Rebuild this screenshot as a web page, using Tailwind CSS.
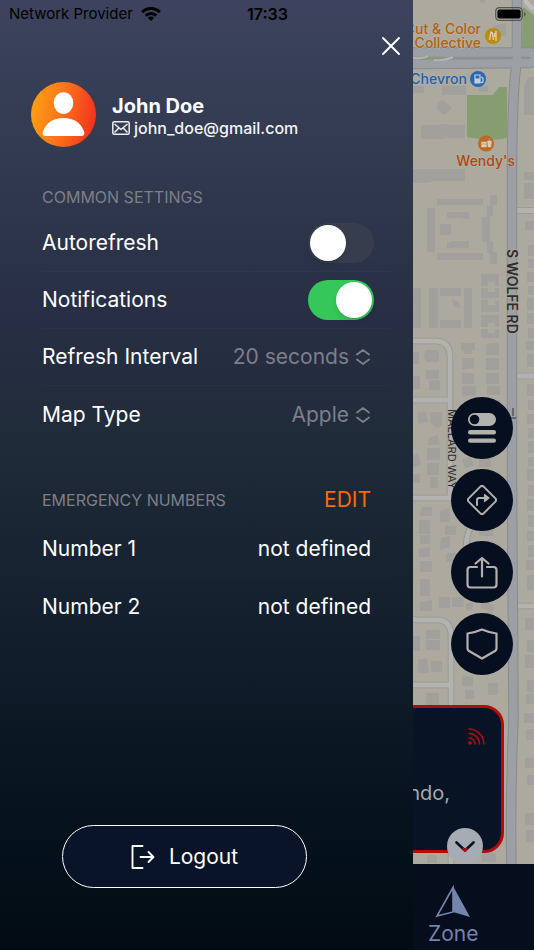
<!DOCTYPE html>
<html lang="en">
<head>
  <meta charset="UTF-8" />
  <meta name="viewport" content="width=device-width, initial-scale=1.0" />
  <title>Settings</title>
  <script src="https://cdn.jsdelivr.net/npm/@tailwindcss/browser@4"></script>
</head>
<body class="bg-[#020b13] font-['Inter','Roboto',sans-serif] text-white">
  <div class="relative grid min-h-screen grid-cols-[1fr_121px]">

    <!-- Status bar -->
    <header class="absolute inset-x-0 top-0 z-20 grid h-7 grid-cols-3 items-center pr-2 pl-[9px] text-[15px] text-black">
      <div class="flex items-center gap-2 whitespace-nowrap">
        <span>Network Provider</span>
        <svg class="h-[14px] w-5" viewBox="0 0 20 14" fill="none" stroke="#000" stroke-width="3">
          <path d="M1.2 5.2a12.6 12.6 0 0 1 17.6 0" />
          <path d="M4.7 8.7a7.6 7.6 0 0 1 10.6 0" />
          <path d="M10 14 6.9 10.9a4.4 4.4 0 0 1 6.2 0z" fill="#000" stroke="none" />
        </svg>
      </div>
      <time class="text-center text-base font-semibold">17:33</time>
      <svg class="h-[14px] w-[31px] justify-self-end" viewBox="0 0 31 14">
        <rect x="0.7" y="0.7" width="26.6" height="12.6" rx="3.6" fill="none" stroke="#55554f" stroke-width="1.2" />
        <rect x="2.4" y="2.4" width="23.2" height="9.2" rx="2" fill="#000" />
        <path d="M29 5v4.400q1.500-.6 1.500-2.200t-1.500-2.200z" fill="#55554f" />
      </svg>
    </header>

    <!-- Settings drawer -->
    <aside class="flex flex-col bg-[linear-gradient(to_bottom,#3d435e_0%,#313a4f_17%,#272e43_34%,#212c3b_45%,#131f2d_66%,#05121c_87%,#020b13_100%)] pt-9 pb-[62px]">
      <button type="button" aria-label="Close" class="mr-3 self-end">
        <svg class="size-5" viewBox="0 0 20 20" fill="none" stroke="#fff" stroke-width="1.9" stroke-linecap="round">
          <path d="M2 2l16 16M18 2 2 18" />
        </svg>
      </button>

      <section class="mt-[26px] flex items-center gap-4 pl-[31px]">
        <svg class="size-[65px] shrink-0" viewBox="0 0 65 65">
          <defs>
            <linearGradient id="avatar" x1="0" y1="0.4" x2="1" y2="0.6">
              <stop offset="0" stop-color="#fd9f14" />
              <stop offset="0.5" stop-color="#fb6f1c" />
              <stop offset="1" stop-color="#f2301d" />
            </linearGradient>
          </defs>
          <circle cx="32.500" cy="32.500" r="32.500" fill="url(#avatar)" />
          <ellipse cx="32.500" cy="21" rx="9.800" ry="10.800" fill="#fff" />
          <path d="M15 54c-3 0-4-2-3-4.500C15 41 22 36 32.500 36S50 41 53 49.500c1 2.500 0 4.500-3 4.500z" fill="#fff" />
        </svg>
        <div class="pt-[2px]">
          <h1 class="text-xl leading-6 font-bold">John Doe</h1>
          <p class="flex items-center gap-1 text-base leading-5 font-medium text-gray-100">
            <svg class="h-[14px] w-[18px]" viewBox="0 0 18 14" fill="none" stroke="#eee" stroke-width="1.500" stroke-linejoin="round">
              <rect x="0.8" y="0.8" width="16.400" height="12.400" rx="1.500" />
              <path d="M2.500 3 9 8.500 15.500 3M2.500 11.500l4.300-4.600M15.500 11.500l-4.300-4.600" />
            </svg>
            john_doe@gmail.com
          </p>
        </div>
      </section>

      <section class="mt-9 pr-[22px] pl-[42px]">
        <h2 class="h-8 text-base leading-7 text-[#7d7f88]">COMMON SETTINGS</h2>
        <ul class="divide-y divide-white/2 text-[21px]">
          <li class="flex h-[57px] items-center justify-between pr-[17px]">
            <label for="autorefresh">Autorefresh</label>
            <input id="autorefresh" type="checkbox" role="switch" class="h-10 w-[66px] appearance-none rounded-full bg-[#373d4d] p-[2px] before:block before:size-9 before:rounded-full before:bg-white before:shadow-md checked:bg-[#35c759] checked:before:ml-auto" />
          </li>
          <li class="flex h-[57px] items-center justify-between pr-[17px]">
            <label for="notifications">Notifications</label>
            <input id="notifications" type="checkbox" role="switch" checked class="h-10 w-[66px] appearance-none rounded-full bg-[#373d4d] p-[2px] before:block before:size-9 before:rounded-full before:bg-white before:shadow-md checked:bg-[#35c759] checked:before:ml-auto" />
          </li>
          <li class="flex h-[57px] items-center justify-between pr-[21px]">
            <label for="interval">Refresh Interval</label>
            <div class="flex items-center gap-[7px] text-[#7d7f88]">
              <select id="interval" class="field-sizing-content appearance-none bg-transparent">
                <option>10 seconds</option>
                <option selected>20 seconds</option>
                <option>30 seconds</option>
              </select>
              <svg class="h-4 w-[14px]" viewBox="0 0 14 16" fill="none" stroke="currentColor" stroke-width="1.800" stroke-linecap="round" stroke-linejoin="round">
                <path d="M1 5.500 7 1l6 4.500M1 10.500 7 15l6-4.500" />
              </svg>
            </div>
          </li>
          <li class="flex h-[57px] items-center justify-between pr-[21px]">
            <label for="maptype">Map Type</label>
            <div class="flex items-center gap-[7px] text-[#7d7f88]">
              <select id="maptype" class="field-sizing-content appearance-none bg-transparent">
                <option selected>Apple</option>
                <option>Google</option>
              </select>
              <svg class="h-4 w-[14px]" viewBox="0 0 14 16" fill="none" stroke="currentColor" stroke-width="1.800" stroke-linecap="round" stroke-linejoin="round">
                <path d="M1 5.500 7 1l6 4.500M1 10.500 7 15l6-4.500" />
              </svg>
            </div>
          </li>
        </ul>
      </section>

      <section class="mt-[38px] pr-[22px] pl-[42px]">
        <div class="mb-[2px] flex h-[38px] items-center justify-between pr-5">
          <h2 class="text-base text-[#7d7f88]">EMERGENCY NUMBERS</h2>
          <button type="button" class="text-[21px] text-[#ff6a00]">EDIT</button>
        </div>
        <ul class="divide-y divide-white/2 text-[21px]">
          <li class="flex h-[57px] items-center justify-between pr-5"><span>Number 1</span><span>not defined</span></li>
          <li class="flex h-[57px] items-center justify-between pr-5"><span>Number 2</span><span>not defined</span></li>
        </ul>
      </section>

      <button type="button" class="mt-auto ml-[62px] flex h-[63px] w-[245px] items-center justify-center gap-[14px] rounded-full border border-white bg-[#0a1428] text-[21px]">
        <svg class="size-6" viewBox="0 0 24 24" fill="none" stroke="#fff" stroke-width="1.900" stroke-linecap="round" stroke-linejoin="round">
          <path d="M11.500 1H1.500v22h10M9.500 12h13M17.500 7l5 5-5 5" />
        </svg>
        Logout
      </button>
    </aside>

    <!-- Dimmed map screen behind the drawer -->
    <main class="relative flex flex-col overflow-hidden bg-[#aca99f]">
      <svg class="absolute inset-0 h-full w-full" viewBox="0 0 121 950" preserveAspectRatio="xMinYMin slice">
        <!-- parks -->
        <g fill="#859d70">
          <path d="M54 95H80L86 87H94V138Q80 142 54 137z" />
          <path d="M110 7 121 15V49H109z" />
        </g>
        <!-- buildings -->
        <g fill="#a1a09d">
          <path d="M66 0h6v3h-3zM80 26l13-3v13H80zM29 86h24v9H29zM0 86h11v7H0zM66 86h9v6h-9z" />
          <path d="M30 100l5 4 4 4-4 4-5 3-3-4-4-3 3-6zM8 125h18v-1h8v1h18v13H31v1H8zM0 169h52v12H20l-4 2H0zM111 86l4-9h6v38h-10z" />
          <path d="M24 199h46v6H24zM14 208h8v44h-8zM34 212h22v7h-4l-7-1h-11zM27 224h11v11H27zM34 243l4-1v-1h18v7H34zM24 253h46v7H24z" />
          <path d="M77 195h7v10h-4v11h-3v25h3v11h4v12h-7v-11h-3v-11h-5v-25h5v-11h3z" />
          <path d="M68 274h18v12h-4v-4h-7v4h-7zM68 288h7v4h7v-4h4v10H68zM68 300h7v5h7v-4h4v11H68zM68 315h18v12h-4v-4h-7v4h-7zM68 329h7v4h7v-4h4v9H68z" />
          <path d="M0 288h8v40H0zM16 288h9v40h-9zM51 288h8v40h-8zM27 288h21v8H27zM27 320h21v8H27zM39 300l7 2 1 6-6-2z" />
          <path d="M0 352h6v12H0zM12 350h14v12H14l-3-4zM13 370h13v9H13zM16 380h11v10H16zM0 376h7v13H0z" />
          <path d="M48 343h14v7h-3v4h-6l-5-4zM50 358h11v10l-12 2zM49 373h12v11H49zM49 386h14v10H49z" />
          <path d="M73 345l5-2h8v12H73zM73 358h13v12H73zM73 373h13v11H73zM74 386h13v9H74zM75 400h12v6H75z" />
          <path d="M111 183h10v16h-10zM111 172h10v8h-10zM112 221h9v9h-9zM115 245h6v11h-6zM115 259h6v9h-6zM114 272h7v10h-7zM115 286h6v9h-6zM114 298h7v12h-7zM114 313h7v11h-7zM115 328h6v10h-6zM113 341h8v9h-8zM114 354h7v13h-7z" />
          <path d="M114 384h7v12h-7zM115 400h6v10h-6zM114 414h7v10h-7zM115 428h6v10h-6zM115 441h6v12h-6zM115 457h6v9h-6zM114 469h7v12h-7zM115 485h6v11h-6zM114 499h7v12h-7zM115 515h6v12h-6zM114 531h7v10h-7zM115 545h6v12h-6zM113 560h8v10h-8zM114 575h7v15h-7z" />
          <path d="M4 413l9-2 2 11-9 2zM17 412h12v14l-6 2-6-6zM0 456l5-2 3 10-8 4zM16 437l9-2 2 10H15zM14 448h13v12H14zM14 463h12v12H14zM17 477h8v11h-8zM0 474h7v9H0z" />
          <path d="M49 460l8-3 4 8-9 3zM66 457h12v10H66zM9 507h10v9H6zM6 520h11v14H6zM27 511l9-3 1 14H27zM32 526h11v9H32zM66 530h14v6H66z" />
          <path d="M7 535h10v9H7zM6 549l11-2v10H6zM7 561h12v11H7zM7 579h10v17H7zM7 602l12-2v11H7zM28 538l9-2v11l-10 3zM33 553h11v9H33zM26 597h11v11H26zM39 598l11-2 1 11H39zM53 603h7v7h-7zM69 602l13 3-3 8-11-5z" />
          <path d="M13 630h14v9H13zM13 640h14v10H13zM0 636h7v15H0zM5 660l9-2 2 15H5zM18 661h11v11H18zM13 693h13v14H13zM49 676h11v10H49zM52 690h9v9h-9zM75 683h10v12H75z" />
          <path d="M112 618h9v12h-9zM114 640h7v12h-7zM112 655h9v13h-9zM114 680h7v12h-7zM113 694h8v10h-8zM111 713h10v10h-10zM113 729h8v11h-8zM112 758h9v10h-9zM114 775h7v10h-7zM112 813h9v12h-9zM113 830h8v12h-8zM14 855h10v8H14zM69 853h14v9H69z" />
        </g>
        <!-- side streets -->
        <g fill="none" stroke="#969693" stroke-width="6.500">
          <path d="M-2 341H22Q37 341 37 357V498M-2 400H37M-2 498H39M103 210.500H123M103 376H123M104 606H124" />
          <path d="M-4 618Q1 620 6 620H24Q38 620 38 636V866M-2 685H38M53 550Q53 532 60 524" />
        </g>
        <g fill="none" stroke="#b2b2af" stroke-width="4.800">
          <path d="M-2 341H22Q37 341 37 357V498M-2 400H37M-2 498H39M102 210.500H123M102 376H123M103 606H124" />
          <path d="M-4 618Q1 620 6 620H24Q38 620 38 636V866M-2 685H38M53 550Q53 532 60 524" />
        </g>
        <!-- main roads -->
        <path d="M0 52.500H116Q123 54 123 58T116 63L0 64" fill="none" stroke="#888b90" stroke-width="10.500" />
        <path d="M104 -2V60Q99 90 99 180V480Q100 620 100.500 720Q97 800 98.500 870" fill="none" stroke="#888b90" stroke-width="10.500" />
        <path d="M0 52.500H116Q123 54 123 58T116 63L0 64" fill="none" stroke="#9c9fa3" stroke-width="8.500" />
        <path d="M104 -2V60Q99 90 99 180V480Q100 620 100.500 720Q97 800 98.500 870" fill="none" stroke="#9c9fa3" stroke-width="8.500" />
        <path d="M0 58.500H94" stroke="#8b8f92" stroke-width="1.500" />
        <path d="M3 60 14 57H30L22 60z" fill="#859d70" />
        <path d="M0 58Q10 59 15 56M21 60Q32 61 40 57" fill="none" stroke="#b4b5b3" stroke-width="2" />
        <path d="M112 0Q117 7 121 9" fill="none" stroke="#c0bfba" stroke-width="4" />
        <!-- street names -->
        <g fill="#2c2c2b" stroke="#aca99f" stroke-width="1.500" paint-order="stroke">
          <text transform="translate(94 249) rotate(90)" font-size="14" font-weight="600">S WOLFE RD</text>
          <text transform="translate(35 409) rotate(90)" font-size="11">MALLARD WAY</text>
        </g>
        <path d="M96 418H103M100 408V416" stroke="#333" stroke-width="1" />
        <!-- places -->
        <g font-size="14" font-weight="500" stroke="#b9b6ac" stroke-width="1" paint-order="stroke" text-anchor="end">
          <text x="68" y="34" fill="#b0600f">Cut &amp; Color</text>
          <text x="68" y="48" fill="#b0600f">Collective</text>
          <text x="54" y="84" fill="#1f60ae">Chevron</text>
          <text x="102" y="166" fill="#b04510">Wendy's</text>
        </g>
        <circle cx="80" cy="36" r="8" fill="#bb8b0c" />
        <path d="M78 31.500 76.500 40M79 32l1.500 8M83 31v6M83 37v4M81.500 33v4" stroke="#ddd6bb" stroke-width="1.300" fill="none" />
        <circle cx="65" cy="79" r="8" fill="#2b67b2" />
        <path d="M62 75h5v8h-5zM68 77l2 1v4q-1 1-2 0" fill="none" stroke="#c5cedb" stroke-width="1.200" />
        <path d="M62 78.500h5V83h-5z" fill="#c5cedb" />
        <circle cx="73" cy="143.500" r="8" fill="#b96a24" />
        <path d="M68.500 142h5v1.500h-5zM68.500 144.500h5V147h-5zM74.500 141h4l-.6 6h-2.800zM76 141l.6-2.500" fill="#dccbb7" stroke="#dccbb7" stroke-width=".5" />
      </svg>

      <div class="relative mt-auto mr-[21px] flex flex-col items-end gap-[10px]">
        <button type="button" aria-label="Layers" class="grid size-[62px] place-items-center rounded-full bg-[#060f20]">
          <svg class="h-[30px] w-7" viewBox="0 0 28 30" fill="#b3b1ac">
            <path d="M6.500 0h15a6.500 6.500 0 0 1 0 13h-15a6.500 6.500 0 0 1 0-13zm0 1.700a4.800 4.800 0 1 0 0 9.600 4.800 4.800 0 0 0 0-9.600z" fill-rule="evenodd" />
            <rect y="17" width="28" height="4.400" rx="2.200" />
            <rect y="25.400" width="28" height="4.400" rx="2.200" />
          </svg>
        </button>
        <button type="button" aria-label="Directions" class="grid size-[62px] place-items-center rounded-full bg-[#060f20]">
          <svg class="size-[30px]" viewBox="0 0 30 30" fill="none" stroke="#b3b1ac" stroke-width="2" stroke-linecap="round" stroke-linejoin="round">
            <path d="M13.600 1.400q1.400-1 2.800 0L28.600 13.600q1 1.400 0 2.800L16.400 28.600q-1.400 1-2.800 0L1.400 16.400q-1-1.400 0-2.800z" />
            <path d="M10 20v-5q0-2 2-2h6" />
            <path d="M17.500 9.500 22 13l-4.500 3.500z" fill="#b3b1ac" stroke-width="1.200" />
          </svg>
        </button>
        <button type="button" aria-label="Share" class="grid size-[62px] place-items-center rounded-full bg-[#060f20]">
          <svg class="h-[33px] w-8" viewBox="0 0 32 33" fill="none" stroke="#b3b1ac" stroke-width="2.200" stroke-linecap="round" stroke-linejoin="round">
            <path d="M11 11H4.500Q1.500 11 1.500 14v14.500q0 3 3 3h23q3 0 3-3V14q0-3-3-3H21M16 20.500V2M9.500 7.500 16 2l6.500 5.500" />
          </svg>
        </button>
        <button type="button" aria-label="Protection" class="grid size-[62px] place-items-center rounded-full bg-[#060f20]">
          <svg class="h-8 w-8" viewBox="0 0 32 32" fill="none" stroke="#b3b1ac" stroke-width="2.200" stroke-linejoin="round">
            <path d="M16 1.500Q9 4.500 1.500 5.500V20.500Q1.500 22 3 23L16 30.500 29 23Q30.500 22 30.500 20.500V5.500Q23 4.500 16 1.500z" />
          </svg>
        </button>
      </div>

      <article class="relative mt-[30px] mr-[30px] mb-[11px] -ml-6 h-[148px] rounded-r-[20px] border-[3px] border-[#b50a0b] bg-[#071426]">
        <svg class="absolute top-5 right-4 size-[17px]" viewBox="0 0 17 17" fill="none" stroke="#b50a0b" stroke-width="1.500">
          <circle cx="2" cy="15" r="1.800" fill="#b50a0b" stroke="none" />
          <path d="M.5 9.800A6.500 6.500 0 0 1 7.200 16.500M.5 5.400A11 11 0 0 1 11.600 16.500M.5 1A15.400 15.400 0 0 1 16 16.500" />
        </svg>
        <p class="absolute top-[71px] right-[51px] text-xl leading-7 whitespace-nowrap text-[#a9a9aa]">Orlando,</p>
        <button type="button" aria-label="Expand" class="absolute right-[18px] -bottom-[14px] grid size-9 place-items-center rounded-full bg-[#a7abb3]">
          <svg class="h-[11px] w-5" viewBox="0 0 20 11" fill="none" stroke="#071426" stroke-width="2.600" stroke-linecap="round" stroke-linejoin="round">
            <path d="M1.500 1.500 10 9.500l8.500-8" />
            <path d="M8.500 8.200 10 9.500l1.500-1.300" stroke="#b50a0b" />
          </svg>
        </button>
      </article>

      <nav class="relative flex h-[86px] bg-[#060d1d] pt-[21px] pl-[15px]">
        <a href="#zone" class="flex flex-col items-center text-[21px] leading-8 text-[#7485ad]">
          <svg class="h-[33px] w-9" viewBox="0 0 36 33">
            <path d="M18 2.500 2 31l16-4z" fill="none" stroke="#7485ad" stroke-width="1.600" />
            <path d="M18 1v26l17 5z" fill="#7485ad" />
          </svg>
          Zone
        </a>
      </nav>
    </main>
  </div>
</body>
</html>
